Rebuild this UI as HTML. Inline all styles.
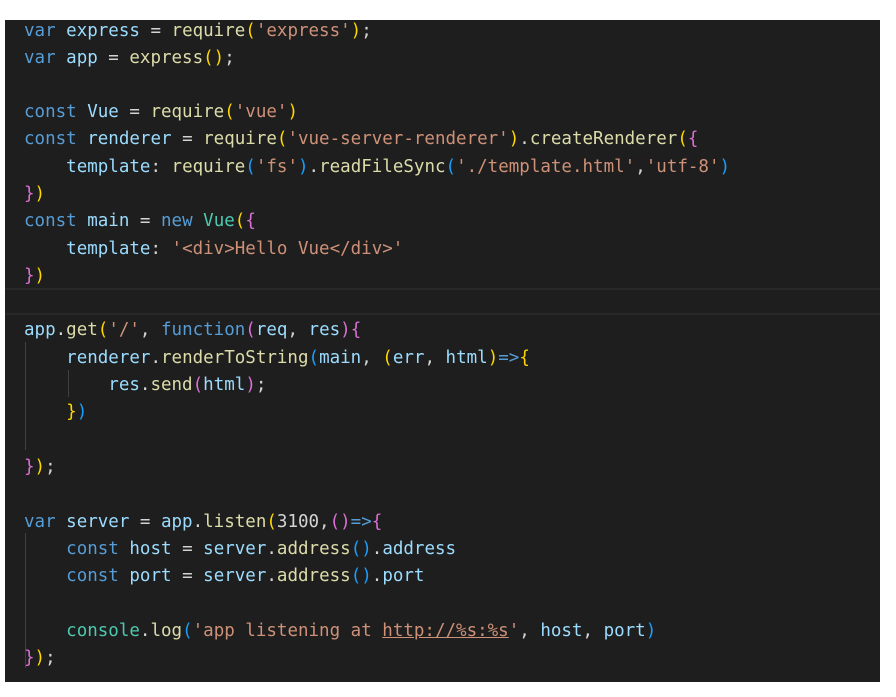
<!DOCTYPE html>
<html><head><meta charset="utf-8"><style>
body{margin:0;width:896px;height:697px;background:#fff;position:relative;overflow:hidden}
#ed{position:absolute;left:5px;top:20px;width:875px;height:662px;background:#1e1e1e;overflow:hidden}
.l{position:absolute;left:19px;height:27px;line-height:27px;white-space:pre;font-family:"DejaVu Sans Mono","Liberation Mono",monospace;font-size:17.5px;color:#d4d4d4;margin-top:1px}
.k{color:#569cd6}.v{color:#9cdcfe}.f{color:#dcdcaa}.s{color:#ce9178}.y{color:#ffd700}.p{color:#da70d6}.b{color:#179fff}.c{color:#4ec9b0}
.g{position:absolute;width:1px;background:#404040}
</style></head><body><div id="ed">
<div style="position:absolute;left:0;right:0;top:268px;height:23px;border-top:2px solid #282828;border-bottom:2px solid #282828"></div>
<div class="g" style="left:20px;top:322px;height:108px"></div>
<div class="g" style="left:63px;top:350px;height:27px"></div>
<div class="g" style="left:20px;top:513px;height:135px"></div>
<div class="l" style="top:-3px"><span class="k">var</span> <span class="v">express</span> = <span class="f">require</span><span class="y">(</span><span class="s">'express'</span><span class="y">)</span>;</div>
<div class="l" style="top:24px"><span class="k">var</span> <span class="v">app</span> = <span class="f">express</span><span class="y">()</span>;</div>
<div class="l" style="top:78px"><span class="k">const</span> <span class="v">Vue</span> = <span class="f">require</span><span class="y">(</span><span class="s">'vue'</span><span class="y">)</span></div>
<div class="l" style="top:105px"><span class="k">const</span> <span class="v">renderer</span> = <span class="f">require</span><span class="y">(</span><span class="s">'vue-server-renderer'</span><span class="y">)</span>.<span class="f">createRenderer</span><span class="y">(</span><span class="p">{</span></div>
<div class="l" style="top:133px">    <span class="v">template</span>: <span class="f">require</span><span class="b">(</span><span class="s">'fs'</span><span class="b">)</span>.<span class="f">readFileSync</span><span class="b">(</span><span class="s">'./template.html'</span>,<span class="s">'utf-8'</span><span class="b">)</span></div>
<div class="l" style="top:160px"><span class="p">}</span><span class="y">)</span></div>
<div class="l" style="top:187px"><span class="k">const</span> <span class="v">main</span> = <span class="k">new</span> <span class="c">Vue</span><span class="y">(</span><span class="p">{</span></div>
<div class="l" style="top:215px">    <span class="v">template</span>: <span class="s">'&lt;div&gt;Hello Vue&lt;/div&gt;'</span></div>
<div class="l" style="top:242px"><span class="p">}</span><span class="y">)</span></div>
<div class="l" style="top:296px"><span class="v">app</span>.<span class="f">get</span><span class="y">(</span><span class="s">'/'</span>, <span class="k">function</span><span class="p">(</span><span class="v">req</span>, <span class="v">res</span><span class="p">)</span><span class="p">{</span></div>
<div class="l" style="top:324px">    <span class="v">renderer</span>.<span class="f">renderToString</span><span class="b">(</span><span class="v">main</span>, <span class="y">(</span><span class="v">err</span>, <span class="v">html</span><span class="y">)</span><span class="k">=&gt;</span><span class="y">{</span></div>
<div class="l" style="top:351px">        <span class="v">res</span>.<span class="f">send</span><span class="p">(</span><span class="v">html</span><span class="p">)</span>;</div>
<div class="l" style="top:378px">    <span class="y">}</span><span class="b">)</span></div>
<div class="l" style="top:433px"><span class="p">}</span><span class="y">)</span>;</div>
<div class="l" style="top:488px"><span class="k">var</span> <span class="v">server</span> = <span class="v">app</span>.<span class="f">listen</span><span class="y">(</span>3100,<span class="p">()</span><span class="k">=&gt;</span><span class="p">{</span></div>
<div class="l" style="top:515px">    <span class="k">const</span> <span class="v">host</span> = <span class="v">server</span>.<span class="f">address</span><span class="b">()</span>.<span class="v">address</span></div>
<div class="l" style="top:542px">    <span class="k">const</span> <span class="v">port</span> = <span class="v">server</span>.<span class="f">address</span><span class="b">()</span>.<span class="v">port</span></div>
<div class="l" style="top:597px">    <span class="c">console</span>.<span class="f">log</span><span class="b">(</span><span class="s">'app listening at <u>http://%s:%s</u>'</span>, <span class="v">host</span>, <span class="v">port</span><span class="b">)</span></div>
<div class="l" style="top:624px"><span class="p">}</span><span class="y">)</span>;</div>
</div></body></html>
